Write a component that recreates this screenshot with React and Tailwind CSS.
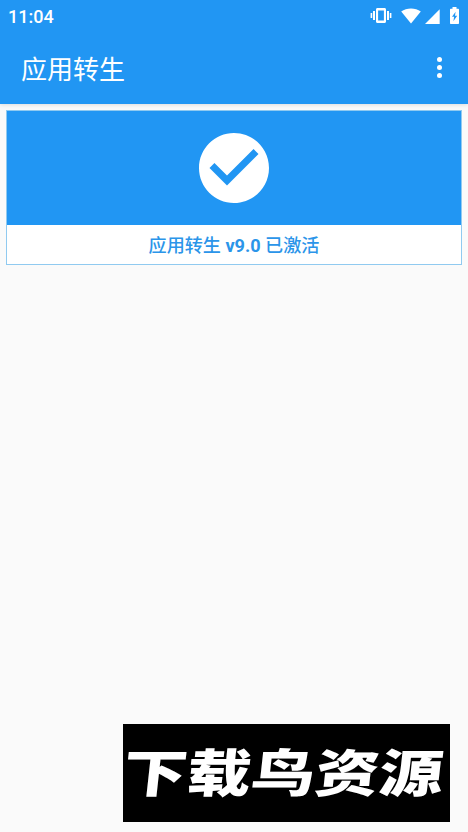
import React from 'react';

const VibrateIcon = () => (
  <svg className="w-[22px] h-[18px]" viewBox="0 0 22 18" fill="currentColor">
    <path fillRule="evenodd" d="M7.500 1h7c.9 0 1.500.6 1.500 1.500v12c0 .9-.6 1.500-1.500 1.500h-7C6.600 16 6 15.400 6 14.500v-12C6 1.600 6.600 1 7.500 1zM8.100 3.500v10h5.800v-10z" />
    <path d="M3 4h2v9H3zM.6 6h1.600v5H.6zM17 4h2v9h-2zM19.800 6h1.600v5h-1.600z" />
  </svg>
);

const WifiIcon = () => (
  <svg className="w-5 h-4" viewBox="0 0 20 16" fill="currentColor">
    <path d="M10 15.400L.2 3.500C3 1.400 6.300 .4 10 .4s7 1 9.800 3.100z" />
  </svg>
);

const SignalIcon = () => (
  <svg className="w-[15px] h-[15px]" viewBox="0 0 15 15" fill="currentColor">
    <path d="M0 15L14.700 .3V15z" />
  </svg>
);

const BatteryIcon = () => (
  <svg className="w-[9px] h-[17px]" viewBox="0 0 9 17" fill="currentColor">
    <path fillRule="evenodd" d="M2.500 0h4v1.700H8c.6 0 1 .4 1 1V16c0 .6-.4 1-1 1H1c-.6 0-1-.4-1-1V2.700c0-.6.4-1 1-1h1.500zM5.600 4.800L2 9.800h2.100L3.400 14.200 7.200 8.700H5z" />
  </svg>
);

const CheckCircle = () => (
  <svg className="w-[84px] h-[84px]" viewBox="0 0 24 24" fill="currentColor">
    <path d="M12 2C6.480 2 2 6.480 2 12s4.480 10 10 10 10-4.480 10-10S17.520 2 12 2zm-2 15l-5-5 1.410-1.410L10 14.170l7.590-7.590L19 8l-9 9z" />
  </svg>
);

const StatusBar = () => (
  <div className="flex h-8 items-center justify-between pl-2 pr-[9px] text-white">
    <span className="pt-px font-[Roboto,sans-serif] text-[18px] font-medium leading-8">11:04</span>
    <div className="flex items-center">
      <VibrateIcon />
      <span className="ml-[9px] -mt-px"><WifiIcon /></span>
      <span className="ml-[4px]"><SignalIcon /></span>
      <span className="ml-[10px] -mt-[2px]"><BatteryIcon /></span>
    </div>
  </div>
);

const AppBar = () => (
  <div className="flex h-[72px] items-center justify-between pl-[21px] pr-[26px] text-white">
    <h1 className="pt-[3px] text-[26px] leading-[72px]">应用转生</h1>
    <button type="button" aria-label="menu" className="mb-px flex flex-col gap-[2.500px]">
      <span className="size-[5.200px] rounded-full bg-white" />
      <span className="size-[5.200px] rounded-full bg-white" />
      <span className="size-[5.200px] rounded-full bg-white" />
    </button>
  </div>
);

const StatusCard = () => (
  <div className="mx-[6px] mt-[6px] h-[155px] border border-[#90caf0] bg-white">
    <div className="flex h-[114px] items-center justify-center bg-[#2196f3] pb-px text-white">
      <CheckCircle />
    </div>
    <p className="pt-px text-center text-[18.100px] font-medium leading-[39px] text-[#2b95e9]">
      应用转生 <span className="font-bold">v9.0</span> 已激活
    </p>
  </div>
);

const Banner = () => (
  <div className="mb-[10px] mr-[18px] mt-auto flex h-[98px] w-[327px] items-center justify-center self-end bg-black pr-[7px] pt-[3px]">
    <span className="-skew-x-[5deg] scale-y-[0.8] whitespace-nowrap text-[64px] font-black leading-none text-white">
      下载鸟资源
    </span>
  </div>
);

const App = () => (
  <div className="flex h-[832px] w-[468px] flex-col overflow-hidden bg-[#fafafa] font-[Roboto,'Noto_Sans_CJK_SC',sans-serif]">
    <header className="bg-[#2196f3] shadow-[0_1px_4px_rgba(0,0,0,0.12)]">
      <StatusBar />
      <AppBar />
    </header>
    <StatusCard />
    <Banner />
  </div>
);

export default App;
